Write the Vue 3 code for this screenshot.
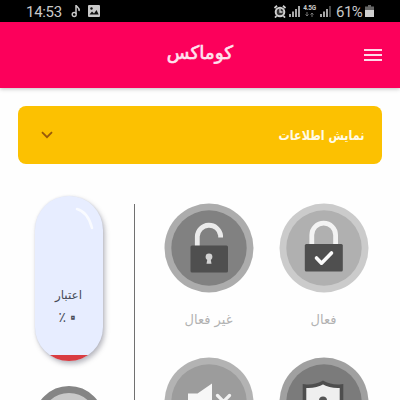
<script setup>
const controls = [
  { id: 'unlock', label: 'غیر فعال', ring: '#acacac', face: '#818181' },
  { id: 'lock', label: 'فعال', ring: '#cbcbcb', face: '#b0b0b0' },
  { id: 'mute', ring: '#b3b3b3', face: '#9c9c9c' },
  { id: 'shield', ring: '#a0a0a0', face: '#7b7b7b' },
]
</script>

<template>
  <div class="screen">
    <div class="status">
      <span class="clock">14:53</span>
      <svg class="note" width="10" height="14" viewBox="0 0 10 14">
        <path d="M5 10V1C5 3 9 3.400 8 7" fill="none" stroke="#c9c9c9" stroke-width="1.500" />
        <circle cx="3.200" cy="10.500" r="2" fill="none" stroke="#c9c9c9" stroke-width="1.400" />
      </svg>
      <svg class="photo" width="12" height="12" viewBox="0 0 12 12">
        <rect width="12" height="12" rx="1" fill="#c9c9c9" />
        <path d="M1.500 9.500 4 6.500l2 2 2.500-3.500 2.200 4.500z" fill="#111" />
        <circle cx="3.500" cy="3.500" r="1.200" fill="#111" />
      </svg>
      <span class="spacer"></span>
      <svg class="alarm" width="12" height="13" viewBox="0 0 12 13">
        <path d="M.5 3 3 .8M11.500 3 9 .8M2.500 11 1 12.600M9.500 11l1.500 1.600" stroke="#cfcfcf" stroke-width="1.800" />
        <circle cx="6" cy="7" r="4.300" fill="#333" stroke="#cfcfcf" stroke-width="2" />
        <path d="M6 4v3h2.500" fill="none" stroke="#cfcfcf" stroke-width="1.300" />
      </svg>
      <svg class="signal" width="11" height="12" viewBox="0 0 11 12">
        <path d="M1 12V9M4 12V6.500M7 12V4M10 12V1" stroke="#c4c4c4" stroke-width="1.700" />
      </svg>
      <span class="net">
        <b>4.5G</b>
        <svg width="9" height="5" viewBox="0 0 9 5">
          <path d="M2 0v4M.5 2.500 2 4l1.500-1.500M7 5V1M5.500 2.500 7 1l1.500 1.500" fill="none" stroke="#777" />
        </svg>
      </span>
      <svg class="signal" width="11" height="12" viewBox="0 0 11 12">
        <path d="M1 12V9M4 12V6.500M7 12V4" stroke="#c4c4c4" stroke-width="1.700" />
        <path d="M10 12V1" stroke="#555" stroke-width="1.700" />
      </svg>
      <span class="percent">61%</span>
      <svg class="battery" width="9" height="12" viewBox="0 0 9 12">
        <path d="M3 0h3v1.500h3V12H0V1.500h3z" fill="#666" />
        <path d="M0 5h9v7H0z" fill="#d0d0d0" />
      </svg>
    </div>

    <header class="bar">
      <h1 dir="rtl"><span>کوماکس</span></h1>
      <div class="menu"><i></i><i></i><i></i></div>
    </header>

    <section class="notice" dir="rtl">
      <span class="notice-text">نمایش اطلاعات</span>
      <svg width="12" height="8" viewBox="0 0 12 8">
        <path d="M1 1.200 6 6.200l5-5" fill="none" stroke="#98590a" stroke-width="1.800" />
      </svg>
    </section>

    <main class="body">
      <aside class="side">
        <div class="capsule" dir="rtl">
          <svg class="shine" width="20" height="26" viewBox="0 0 20 26">
            <path d="M2 2Q13 5 17 21" fill="none" stroke="#fff" stroke-width="2.600" stroke-linecap="round" opacity=".75" />
          </svg>
          <span class="credit">اعتبار</span>
          <span class="amount"><span class="zero">۰</span><span class="unit">٪</span></span>
          <div class="level"></div>
        </div>
        <div class="dial"></div>
      </aside>
      <div class="divider"></div>
      <div class="grid">
        <div v-for="c in controls" :key="c.id" class="cell">
          <svg class="disc" width="90" height="90" viewBox="0 0 90 90">
            <circle cx="45" cy="45" r="44.500" :fill="c.ring" />
            <circle cx="45" cy="45" r="37.700" :fill="c.face" />
            <g v-if="c.id === 'unlock'">
              <path d="M33.300 44V33.500a11.700 11.700 0 0 1 23.300-1V34.500" fill="none" stroke="#ebebeb" stroke-width="4.800" />
              <rect x="26.500" y="42.500" width="37.500" height="27" rx="1.500" fill="#4f4f4f" />
              <circle cx="45" cy="53.800" r="3.400" fill="#d2d2d2" />
              <path d="M43.800 54h2.500l1.200 6.800h-5z" fill="#d2d2d2" />
            </g>
            <g v-else-if="c.id === 'lock'">
              <path d="M32.800 42V32a11.900 11.900 0 0 1 23.800 0v10" fill="none" stroke="#f3f3f3" stroke-width="4.800" />
              <rect x="25.800" y="41" width="38" height="27.500" rx="1.500" fill="#4f4f4f" />
              <path d="m37.500 55 5 5.200L52.500 50" fill="none" stroke="#fafafa" stroke-width="3.600" stroke-linecap="round" stroke-linejoin="round" />
            </g>
            <g v-else-if="c.id === 'mute'">
              <path d="M24 36.500h9.500L48 26.500v36L33.500 53H24z" fill="#f7f7f7" />
              <path d="m53.500 38.500 12 12m0-12-12 12" stroke="#f2f2f2" stroke-width="3.200" stroke-linecap="round" />
            </g>
            <g v-else>
              <path d="M44 25.500Q36 30 25.500 29v17q0 16 18.500 23 18.500-7 18.500-23V29Q52 30 44 25.500z" fill="#efefef" stroke="#4e4e4e" stroke-width="3.600" />
              <circle cx="44" cy="43.500" r="4" fill="#555" />
              <path d="M42.500 45h3l1.500 9h-6z" fill="#555" />
            </g>
          </svg>
          <span v-if="c.label" class="label" dir="rtl">{{ c.label }}</span>
        </div>
      </div>
    </main>
  </div>
</template>

<style>
body {
  background: #fefefe;
}
</style>

<style scoped>
.screen {
  width: 400px;
  height: 400px;
  overflow: hidden;
  background: #fefefe;
  font-family: "DejaVu Sans", sans-serif;
}
.status {
  display: flex;
  align-items: center;
  box-sizing: border-box;
  height: 22px;
  padding: 0 26px;
  background: #000;
  color: #c9c9c9;
  font: 15px/22px Roboto, sans-serif;
}
.clock {
  width: 37px;
  padding-top: 1px;
  letter-spacing: -.3px;
}
.note {
  margin-left: 8px;
}
.photo {
  margin-left: 7px;
}
.spacer {
  flex: 1;
}
.alarm {
  margin-right: 3px;
}
.signal {
  margin-right: 3px;
}
.net {
  display: flex;
  flex-direction: column;
  align-items: center;
  width: 13px;
  margin-right: 4px;
}
.net b {
  font: bold 6.500px/7px Roboto, sans-serif;
  letter-spacing: -.3px;
}
.percent {
  width: 26px;
  margin-left: 2px;
  margin-right: 3px;
  padding-top: 1px;
  letter-spacing: -.5px;
}
.bar {
  display: flex;
  align-items: center;
  justify-content: space-between;
  box-sizing: border-box;
  height: 66px;
  padding: 0 18px 0 166px;
  background: #fc005b;
  box-shadow: 0 1px 4px rgba(0, 0, 0, .25);
}
h1 {
  width: 68px;
  margin: 0 0 4px;
  color: #ffe3ee;
  font-size: 18.500px;
  font-weight: normal;
  line-height: 24px;
  display: flex;
  justify-content: center;
  white-space: nowrap;
  -webkit-text-stroke: .6px #ffe3ee;
}
.menu {
  display: flex;
  flex-direction: column;
  gap: 3px;
}
.menu i {
  width: 18px;
  height: 2px;
  background: #ffd9e8;
}
.notice {
  display: flex;
  align-items: center;
  justify-content: space-between;
  box-sizing: border-box;
  height: 58px;
  margin: 18px 18px 0;
  padding: 0 18px 0 23px;
  border-radius: 8px;
  background: #fcc101;
}
.notice-text {
  color: #fffbe8;
  font-size: 13.500px;
  font-weight: bold;
  white-space: nowrap;
  transform: scaleX(.83);
  transform-origin: right center;
}
.body {
  display: flex;
  height: 236px;
}
.side {
  display: flex;
  flex-direction: column;
  align-items: center;
  width: 133px;
  padding: 32px 0 0 4px;
  box-sizing: border-box;
}
.capsule {
  position: relative;
  display: flex;
  flex: none;
  flex-direction: column;
  align-items: center;
  box-sizing: border-box;
  width: 68px;
  height: 165px;
  padding-top: 88px;
  border-radius: 34px;
  overflow: hidden;
  background: #e7edff;
  box-shadow: 2px 3px 5px rgba(60, 60, 80, .35), 0 0 2px rgba(120, 130, 160, .2);
  color: #484c58;
  font-size: 12px;
  line-height: 22px;
  white-space: nowrap;
}
.shine {
  position: absolute;
  top: 11px;
  right: 8px;
}
.amount {
  display: flex;
  align-items: center;
  gap: 1px;
}
.zero {
  color: #e7edff;
  font-size: 21px;
  line-height: 20px;
  -webkit-text-stroke: 1.300px #484c58;
}
.unit {
  font-size: 14px;
}
.level {
  width: 100%;
  height: 6px;
  margin-top: auto;
  background: #d93c41;
}
.dial {
  flex: none;
  box-sizing: border-box;
  width: 70px;
  height: 70px;
  margin-top: 25px;
  border: 7px solid #858585;
  border-radius: 50%;
  background: #c9c9c9;
}
.divider {
  width: 1px;
  margin-top: 40px;
  margin-left: 1px;
  background: #707070;
}
.grid {
  display: grid;
  grid-template-columns: 90px 90px;
  grid-auto-rows: 154px;
  column-gap: 25px;
  padding: 39px 0 0 28.500px;
}
.cell {
  display: flex;
  flex-direction: column;
  align-items: center;
}
.disc {
  flex: none;
}
.label {
  margin-top: 17px;
  color: #b2b2b2;
  font-size: 13px;
  line-height: 20px;
  white-space: nowrap;
}
</style>
